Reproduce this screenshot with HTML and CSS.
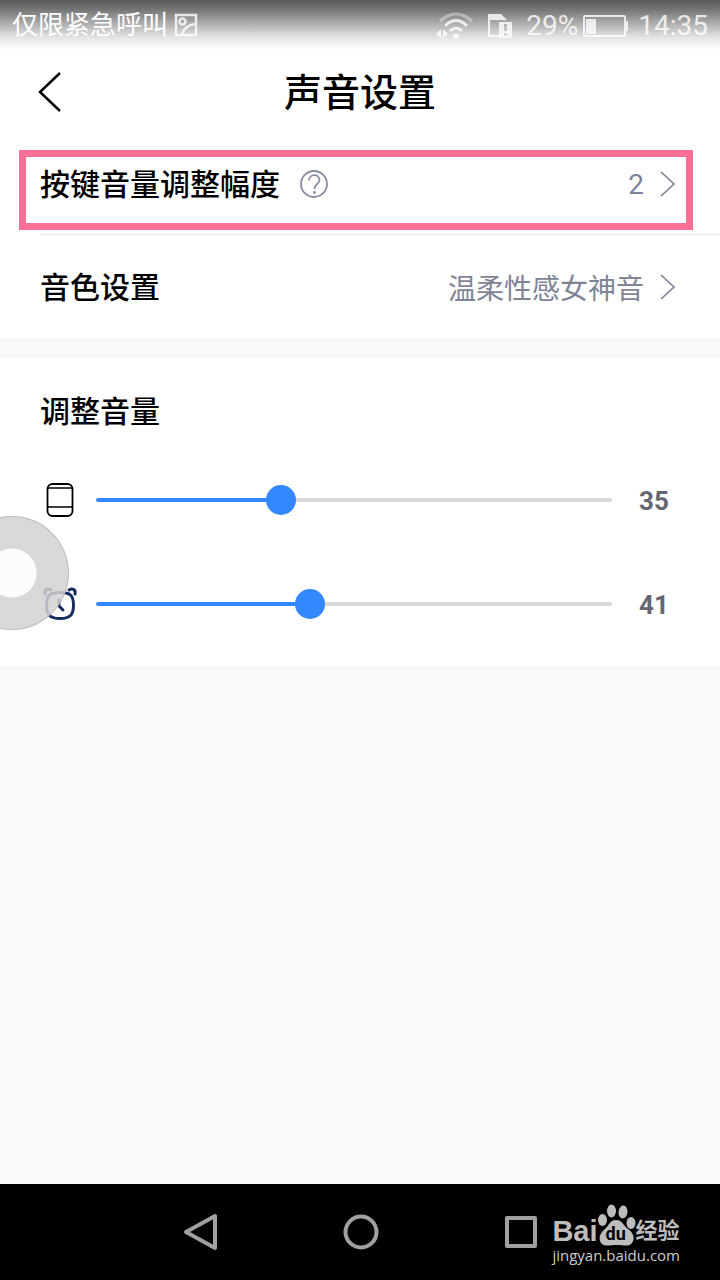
FILE: index.html
```html
<!DOCTYPE html>
<html lang="zh-CN">
<head>
    <meta charset="UTF-8">
    <meta name="viewport" content="width=device-width, initial-scale=1.0">
    <title>声音设置</title>
    <link rel="stylesheet" href="styles.css">
</head>
<body>
    <div class="status-bar">
        <span class="carrier">仅限紧急呼叫</span>
        <svg class="status-picture" width="24" height="24" viewBox="0 0 24 24" fill="none" stroke="currentColor" stroke-width="2.500">
            <rect x="2" y="2" width="20" height="20"/>
            <circle cx="8.500" cy="8.500" r="3"/>
            <path d="M8 21C10 15 14 12 21 11"/>
        </svg>
        <div class="status-right">
            <svg class="status-wifi" width="38" height="28" viewBox="0 0 38 28" fill="none" stroke="currentColor" stroke-width="3">
                <path d="M4 9Q20 -5 36 9" opacity="0.45"/>
                <path d="M9 14Q20 3 31 14"/>
                <path d="M14 19Q20 13 26 19"/>
                <circle cx="20" cy="24" r="2.800" fill="currentColor" stroke="none"/>
                <path d="M0 22L5 17V26zM12 22L7 17V26z" fill="currentColor" stroke="none"/>
            </svg>
            <svg class="status-sim" width="26" height="26" viewBox="0 0 26 26">
                <path d="M12 23H2V2H13L18 7" fill="none" stroke="currentColor" stroke-width="2"/>
                <path d="M1 1H14L20 7H1z" fill="currentColor"/>
                <path fill-rule="evenodd" d="M12 9H25V25H12zM17 11V18H20V11zM17 20V23H20V20z" fill="currentColor"/>
            </svg>
            <span class="battery-text">29%</span>
            <svg class="status-battery" width="46" height="24" viewBox="0 0 46 24">
                <rect x="1" y="2" width="41" height="20" rx="1" fill="none" stroke="currentColor" stroke-width="2"/>
                <path d="M3 5H13V20H3zM43 7H45V17H43z" fill="currentColor"/>
            </svg>
            <span class="clock">14:35</span>
        </div>
    </div>

    <header class="header">
        <button type="button" class="back-btn" aria-label="返回">
            <svg width="24" height="42" viewBox="0 0 24 42" fill="none" stroke="#000" stroke-width="2.500">
                <path d="M22 2L2 21L22 40"/>
            </svg>
        </button>
        <h1>声音设置</h1>
    </header>

    <main class="content">
        <section class="settings-list">
            <div class="setting-item highlight">
                <span class="setting-name">按键音量调整幅度</span>
                <button type="button" class="help-btn" aria-label="帮助">
                    <svg width="30" height="30" viewBox="0 0 30 30" fill="none" stroke="currentColor" stroke-width="1.800">
                        <circle cx="15" cy="15" r="13"/>
                        <path d="M10 11.500C10 4.500 20.500 4.500 20.500 11C20.500 15 15.500 14.500 15.500 20"/>
                        <circle cx="15.500" cy="23.500" r="1.400" fill="currentColor" stroke="none"/>
                    </svg>
                </button>
                <button type="button" class="setting-value" aria-label="按键音量调整幅度 2">
                    2
                    <svg class="arrow" width="16" height="26" viewBox="0 0 16 26" fill="none" stroke="currentColor" stroke-width="1.700">
                        <path d="M1 1L14 13L1 25"/>
                    </svg>
                </button>
            </div>
            <div class="setting-item">
                <span class="setting-name">音色设置</span>
                <button type="button" class="setting-value" aria-label="音色设置 温柔性感女神音">
                    温柔性感女神音
                    <svg class="arrow" width="16" height="26" viewBox="0 0 16 26" fill="none" stroke="currentColor" stroke-width="1.700">
                        <path d="M1 1L14 13L1 25"/>
                    </svg>
                </button>
            </div>
        </section>

        <section class="volume">
            <h2>调整音量</h2>
            <div class="volume-item">
                <label for="speakerVolume" aria-label="音箱音量">
                    <svg width="40" height="40" viewBox="0 0 40 40" fill="none" stroke="#000" stroke-width="1.800">
                        <rect x="7.500" y="4" width="25" height="32" rx="5"/>
                        <path d="M8 8H32M7 27H33" stroke-width="1.600"/>
                    </svg>
                </label>
                <input type="range" id="speakerVolume" min="0" max="100" value="35" style="--value: 35%">
                <output for="speakerVolume">35</output>
            </div>
            <div class="volume-item">
                <label for="alarmVolume" aria-label="闹钟音量">
                    <svg width="40" height="40" viewBox="0 0 40 40" fill="none" stroke="#162c60" stroke-width="3" stroke-linecap="round">
                        <path d="M20 8.500C30 8.500 33.500 11 33.500 21C33.500 31 30 34.500 20 34.500C10 34.500 6.500 31 6.500 21C6.500 11 10 8.500 20 8.500z"/>
                        <path d="M19 16V22L23 26M5 10C4 5 8 4 11 6M35 10C36 5 32 4 29 6"/>
                    </svg>
                </label>
                <input type="range" id="alarmVolume" min="0" max="100" value="41" style="--value: 41%">
                <output for="alarmVolume">41</output>
            </div>
            <!-- 悬浮球 -->
            <button type="button" class="float-ball" aria-label="悬浮球"></button>
        </section>
    </main>

    <nav class="nav-bar">
        <button type="button" aria-label="返回">
            <svg width="40" height="40" viewBox="0 0 40 40" fill="none" stroke="currentColor" stroke-width="4" stroke-linejoin="round">
                <path d="M35 4V36L6 20z"/>
            </svg>
        </button>
        <button type="button" aria-label="主页">
            <svg width="40" height="40" viewBox="0 0 40 40" fill="none" stroke="currentColor" stroke-width="4">
                <circle cx="21" cy="20" r="15.500"/>
            </svg>
        </button>
        <button type="button" aria-label="最近任务">
            <svg width="40" height="40" viewBox="0 0 40 40" fill="none" stroke="currentColor" stroke-width="4" stroke-linejoin="round">
                <rect x="7" y="6" width="28" height="28"/>
            </svg>
        </button>
        <div class="watermark">
            <div class="logo">
                <span class="logo-bai">Bai</span>
                <span class="logo-paw">
                    <svg width="38" height="42" viewBox="0 0 38 42" fill="currentColor">
                        <ellipse cx="4.500" cy="16" rx="4.500" ry="6"/>
                        <ellipse cx="13.500" cy="7" rx="4.500" ry="6.500"/>
                        <ellipse cx="25" cy="8" rx="4.500" ry="6.500" transform="rotate(8 25 8)"/>
                        <ellipse cx="33" cy="19" rx="4.500" ry="6"/>
                        <path d="M18 16C24 16 25 21 30 25C36 29 37 35 34 39C31 43 26 41 19 41C12 41 6 43 3 39C0 34 2 29 7 25C12 20 12 16 18 16z"/>
                    </svg>
                    <span class="logo-du">du</span>
                </span>
                <span class="logo-jy">经验</span>
            </div>
            <div class="site">jingyan.baidu.com</div>
        </div>
    </nav>

    <script>
        // 拖动滑块时更新数值和进度
        document.querySelectorAll('.volume-item input').forEach(input => {
            input.addEventListener('input', () => {
                input.style.setProperty('--value', input.value + '%');
                input.nextElementSibling.textContent = input.value;
            });
        });
    </script>
</body>
</html>
```
FILE: styles.css
```css
* {
    box-sizing: border-box;
}

body {
    margin: 0;
    min-height: 100vh;
    display: flex;
    flex-direction: column;
    font-family: Roboto, 'Noto Sans CJK SC', sans-serif;
    background: #f9f9f9;
    color: #000;
}

button {
    padding: 0;
    border: none;
    background: none;
    color: inherit;
    font: inherit;
    cursor: pointer;
}

svg {
    display: block;
    flex: none;
}

.status-bar {
    display: flex;
    align-items: center;
    height: 50px;
    padding: 0 12px;
    background: linear-gradient(#5a5a5a 0%, #777 20%, #aaa 45%, #e4e4e4 75%, #fff 100%);
    color: #fff;
    font-size: 26px;
    line-height: 50px;
}

.status-picture {
    margin-left: 6px;
    opacity: 0.8;
}

.status-right {
    display: flex;
    align-items: center;
    margin-left: auto;
    padding-top: 2px;
    font-size: 28px;
    opacity: 0.8;
}

.status-sim {
    margin: 0 13px;
}

.status-battery {
    margin: 0 9px 0 5px;
}

.header {
    display: flex;
    align-items: center;
    justify-content: center;
    position: relative;
    height: 84px;
    background: #fff;
}

.header h1 {
    margin: 0;
    padding-top: 2px;
    font-size: 38px;
    font-weight: 500;
    line-height: 84px;
}

.back-btn {
    position: absolute;
    left: 38px;
}

.settings-list {
    background: #fff;
}

.setting-item {
    display: flex;
    align-items: center;
    position: relative;
    height: 103px;
    margin-left: 40px;
    padding-right: 44px;
    font-size: 30px;
}

.setting-item:first-child {
    height: 101px;
    border-bottom: 1px solid #e8e8e8;
}

.setting-name {
    padding-bottom: 4px;
    font-weight: 500;
}

.highlight::after {
    content: '';
    position: absolute;
    top: 16px;
    right: 27px;
    bottom: 4px;
    left: -21px;
    border: 7px solid #f96f96;
    pointer-events: none;
}

.help-btn {
    margin-left: 19px;
    color: #888da0;
}

.setting-value {
    display: flex;
    align-items: center;
    gap: 16px;
    margin-left: auto;
    color: #7f8496;
    font-size: 28px;
}

.volume {
    position: relative;
    margin-top: 20px;
    padding: 32px 40px 10px;
    background: #fff;
}

.volume h2 {
    margin: 0 0 14px;
    font-size: 30px;
    font-weight: 500;
    line-height: 44px;
}

.volume-item {
    display: flex;
    align-items: center;
    height: 104px;
}

.volume-item input {
    -webkit-appearance: none;
    appearance: none;
    flex: 1;
    min-width: 0;
    height: 30px;
    margin: 0 27px 0 16px;
    background: none;
}

.volume-item input::-webkit-slider-runnable-track {
    height: 4px;
    border-radius: 2px;
    background: linear-gradient(to right, #3388ff var(--value), #d8d8d8 var(--value));
}

.volume-item input::-webkit-slider-thumb {
    -webkit-appearance: none;
    width: 30px;
    height: 30px;
    margin-top: -13px;
    border-radius: 50%;
    background: #3388ff;
}

.volume-item output {
    width: 41px;
    padding-top: 2px;
    color: #666670;
    font-size: 26px;
    font-weight: 700;
}

.float-ball {
    position: absolute;
    left: -45px;
    top: 158px;
    width: 114px;
    height: 114px;
    border: 1px solid rgba(180, 180, 180, 0.8);
    border-radius: 50%;
    background: radial-gradient(circle, #fcfcfc 24px, rgba(210, 210, 210, 0.85) 25px);
}

.nav-bar {
    display: flex;
    align-items: center;
    justify-content: center;
    gap: 120px;
    position: relative;
    height: 96px;
    margin-top: auto;
    background: #000;
    color: #a0a0a0;
}

.watermark {
    position: absolute;
    right: 40px;
    bottom: 16px;
    color: #bdbdbd;
}

.logo {
    display: flex;
    align-items: flex-end;
    height: 42px;
    font-weight: 700;
}

.logo-bai {
    font-family: 'Liberation Sans', sans-serif;
    font-size: 29px;
    line-height: 30px;
}

.logo-paw {
    position: relative;
}

.logo-du {
    position: absolute;
    left: 8px;
    bottom: 2px;
    color: #000;
    font-size: 18px;
    line-height: 20px;
}

.logo-jy {
    font-size: 22px;
    line-height: 30px;
}

.site {
    color: #ccc;
    font-family: 'Open Sans', sans-serif;
    font-size: 15px;
    line-height: 18px;
}
```
